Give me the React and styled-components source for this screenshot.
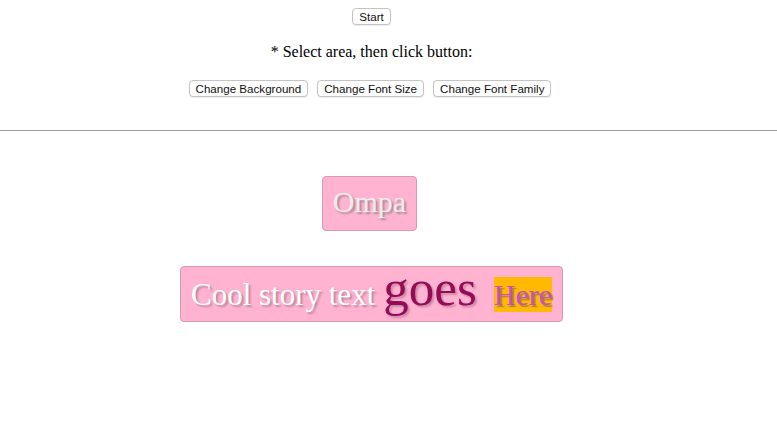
import React from 'react';
import styled, { createGlobalStyle } from 'styled-components';

const Global = createGlobalStyle`
  body {
    margin: 0;
    background: #fff;
    font-family: "Liberation Serif", "Times New Roman", serif;
    color: #000;
  }
`;

const Page = styled.div`
  width: 777px;
  height: 437px;
  overflow: hidden;
`;

const Controls = styled.div`
  display: flex;
  flex-direction: column;
  align-items: center;
  padding: 8px 34px 0 0;
  height: 130px;
  box-sizing: border-box;
`;

const Button = styled.button`
  font-family: "Liberation Sans", Arial, sans-serif;
  font-size: 11.6px;
  line-height: 15px;
  height: 17px;
  padding: 0 6px;
  background: #fff;
  color: #111;
  border: 1px solid #c4c4c4;
  border-radius: 4px;
  box-shadow: 0 1px 1px rgba(0, 0, 0, 0.08);
  cursor: pointer;
`;

const Hint = styled.p`
  margin: 18px 0 0;
  font-size: 16px;
  line-height: 18px;
`;

const ButtonRow = styled.div`
  display: flex;
  gap: 9px;
  margin: 19px 3px 0 0;
`;

const Divider = styled.hr`
  margin: 0;
  border: none;
  border-top: 1px solid #9c9c9c;
  height: 0;
`;

const Stage = styled.div`
  display: flex;
  flex-direction: column;
  align-items: center;
  gap: 35px;
  padding: 45px 34px 0 0;
`;

const Card = styled.div`
  background: #ffb3d1;
  border: 1px solid #d49cb3;
  border-radius: 4px;
  padding: ${(p) => p.$pad};
  height: ${(p) => p.$height}px;
  box-sizing: border-box;
  display: flex;
  align-items: baseline;
  white-space: nowrap;
  line-height: ${(p) => p.$line}px;
  margin-left: ${(p) => p.$shift || 0}px;
`;

const Word = styled.span`
  font-size: ${(p) => p.$size}px;
  color: ${(p) => p.$color};
  background: ${(p) => p.$bg || 'transparent'};
  margin-left: ${(p) => p.$gap || 0}px;
  text-shadow: ${(p) => p.$shadow};
  line-height: ${(p) => p.$line || 'inherit'};
`;

export default function App() {
  return (
    <Page>
      <Global />
      <Controls>
        <Button>Start</Button>
        <Hint>* Select area, then click button:</Hint>
        <ButtonRow>
          <Button>Change Background</Button>
          <Button>Change Font Size</Button>
          <Button>Change Font Family</Button>
        </ButtonRow>
      </Controls>
      <Divider />
      <Stage>
        <Card $pad="0 10px" $height={55} $line={50} $shift={-4}>
          <Word $size={30} $color="#ececec" $shadow="2px 2px 2px #a88a95">
            Ompa
          </Word>
        </Card>
        <Card $pad="0 10px" $height={56} $line={54}>
          <Word $size={31} $color="#ffffff" $shadow="2px 2px 2px #b9869a">
            Cool story text
          </Word>
          <Word
            $size={51}
            $color="#960b55"
            $gap={8}
            $line="42px"
            $shadow="2px 2px 2px #c98aa5"
          >
            goes
          </Word>
          <Word
            $size={30}
            $color="#c54fc4"
            $bg="#ffb900"
            $gap={17}
            $line="35px"
            $shadow="2px 2px 1px #b0803a"
          >
            Here
          </Word>
        </Card>
      </Stage>
    </Page>
  );
}
